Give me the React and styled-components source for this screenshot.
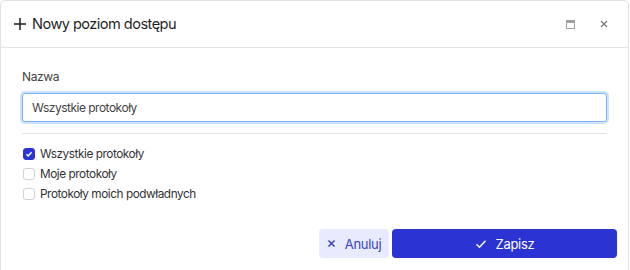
import React, { useState } from 'react';
import styled, { createGlobalStyle } from 'styled-components';

const GlobalStyle = createGlobalStyle`
    html, body {
        margin : 0;
        padding : 0;
        background : #fff;
        font-family : Inter, "Noto Sans", sans-serif;
    }
`

const Dialog = styled.div`
    box-sizing : border-box;
    width : 629px;
    height : 276px;
    border : 1px solid #e2e2e4;
    border-radius : 5px;
    background : #fff;
    display : flex;
    flex-direction : column;
`

const Header = styled.div`
    height : 46px;
    border-bottom : 1px solid #e4e4e6;
    display : flex;
    align-items : center;
    padding : 0 0 0 12px;
`

const Title = styled.h1`
    flex : 1;
    margin : 0;
    display : flex;
    align-items : center;
    gap : 5px;
    font-size : 14.6px;
    font-weight : 400;
    color : #1f1f1f;
    letter-spacing : -0.55px;
`

const HeaderButton = styled.button`
    border : none;
    background : none;
    padding : 0;
    width : 34px;
    height : 30px;
    display : flex;
    align-items : center;
    justify-content : center;
    color : ${p => p.light ? '#a0a0a0' : '#7a7a7a'};
    margin-right : ${p => p.last ? '7px' : '0'};
`

const Body = styled.div`
    padding : 21px 21px 0 21px;
    display : flex;
    flex-direction : column;
`

const Label = styled.label`
    font-size : 12px;
    line-height : 16px;
    color : #444;
    letter-spacing : -0.4px;
    margin-bottom : 8px;
`

const Input = styled.input`
    box-sizing : border-box;
    height : 29px;
    width : 100%;
    border : 1px solid #7db4f6;
    box-shadow : 0 0 0 2px #cde2fd;
    border-radius : 3px;
    padding : 0 9px;
    font-family : inherit;
    font-size : 12px;
    letter-spacing : -0.5px;
    color : #444;
    outline : none;
`

const Divider = styled.hr`
    border : none;
    border-top : 1px solid #e2e2e4;
    margin : 11px 0 10px 0;
`

const CheckRow = styled.label`
    display : flex;
    align-items : center;
    gap : 5px;
    height : 20px;
    font-size : 11.8px;
    letter-spacing : -0.45px;
    color : #333;
`

const Box = styled.span`
    box-sizing : border-box;
    width : 12px;
    height : 12px;
    border-radius : 3px;
    border : 1px solid ${p => p.checked ? '#2b34d2' : '#d2d2d6'};
    background : ${p => p.checked ? '#2b34d2' : '#fff'};
    display : flex;
    align-items : center;
    justify-content : center;
    margin-left : 1px;
`

const Footer = styled.div`
    display : flex;
    justify-content : flex-end;
    gap : 3px;
    padding : 25px 11px 0 0;
`

const Button = styled.button`
    box-sizing : border-box;
    height : 29px;
    width : ${p => p.wide ? '225px' : '70px'};
    border : none;
    border-radius : 4px;
    background : ${p => p.primary ? '#2b34d2' : '#e7ebfd'};
    color : ${p => p.primary ? '#fff' : '#3b40c9'};
    font-family : inherit;
    font-size : 13px;
    letter-spacing : -0.3px;
    display : flex;
    align-items : center;
    justify-content : center;
    gap : 9px;
    padding : 0;
`

const options = ['Wszystkie protokoły', 'Moje protokoły', 'Protokoły moich podwładnych'];

const App = () => {
    const [checked, setChecked] = useState([true, false, false]);

    return (
        <>
            <GlobalStyle />
            <Dialog>
                <Header>
                    <Title>
                        <svg width="14" height="14" viewBox="0 0 14 14">
                            <path d="M7 1v12M1 7h12" stroke="#1f1f1f" strokeWidth="1.5" />
                        </svg>
                        Nowy poziom dostępu
                    </Title>
                    <HeaderButton light aria-label="Maksymalizuj">
                        <svg width="9" height="9" viewBox="0 0 9 9">
                            <rect x="0.5" y="0.5" width="8" height="8" fill="none" stroke="currentColor" />
                            <rect x="0.5" y="0.5" width="8" height="2.5" fill="currentColor" />
                        </svg>
                    </HeaderButton>
                    <HeaderButton last aria-label="Zamknij">
                        <svg width="8" height="8" viewBox="0 0 8 8">
                            <path d="M1 1l6 6M7 1l-6 6" stroke="currentColor" strokeWidth="1.4" />
                        </svg>
                    </HeaderButton>
                </Header>
                <Body>
                    <Label>Nazwa</Label>
                    <Input defaultValue="Wszystkie protokoły" autoFocus />
                    <Divider />
                    {options.map((o, i) => (
                        <CheckRow key={o} onClick={() => setChecked(c => c.map((v, j) => j === i ? !v : v))}>
                            <Box checked={checked[i]}>
                                {checked[i] && (
                                    <svg width="8" height="8" viewBox="0 0 8 8">
                                        <path d="M1.5 4.2l1.7 1.7L6.6 2.3" fill="none" stroke="#fff" strokeWidth="1.5" />
                                    </svg>
                                )}
                            </Box>
                            {o}
                        </CheckRow>
                    ))}
                </Body>
                <Footer>
                    <Button>
                        <svg width="9" height="9" viewBox="0 0 9 9">
                            <path d="M1.5 1.5l6 6M7.5 1.5l-6 6" stroke="currentColor" strokeWidth="1.5" />
                        </svg>
                        Anuluj
                    </Button>
                    <Button primary wide>
                        <svg width="12" height="10" viewBox="0 0 12 10">
                            <path d="M1.5 5.2l3 3L10.5 1.8" fill="none" stroke="currentColor" strokeWidth="1.4" />
                        </svg>
                        Zapisz
                    </Button>
                </Footer>
            </Dialog>
        </>
    )
}

export default App
